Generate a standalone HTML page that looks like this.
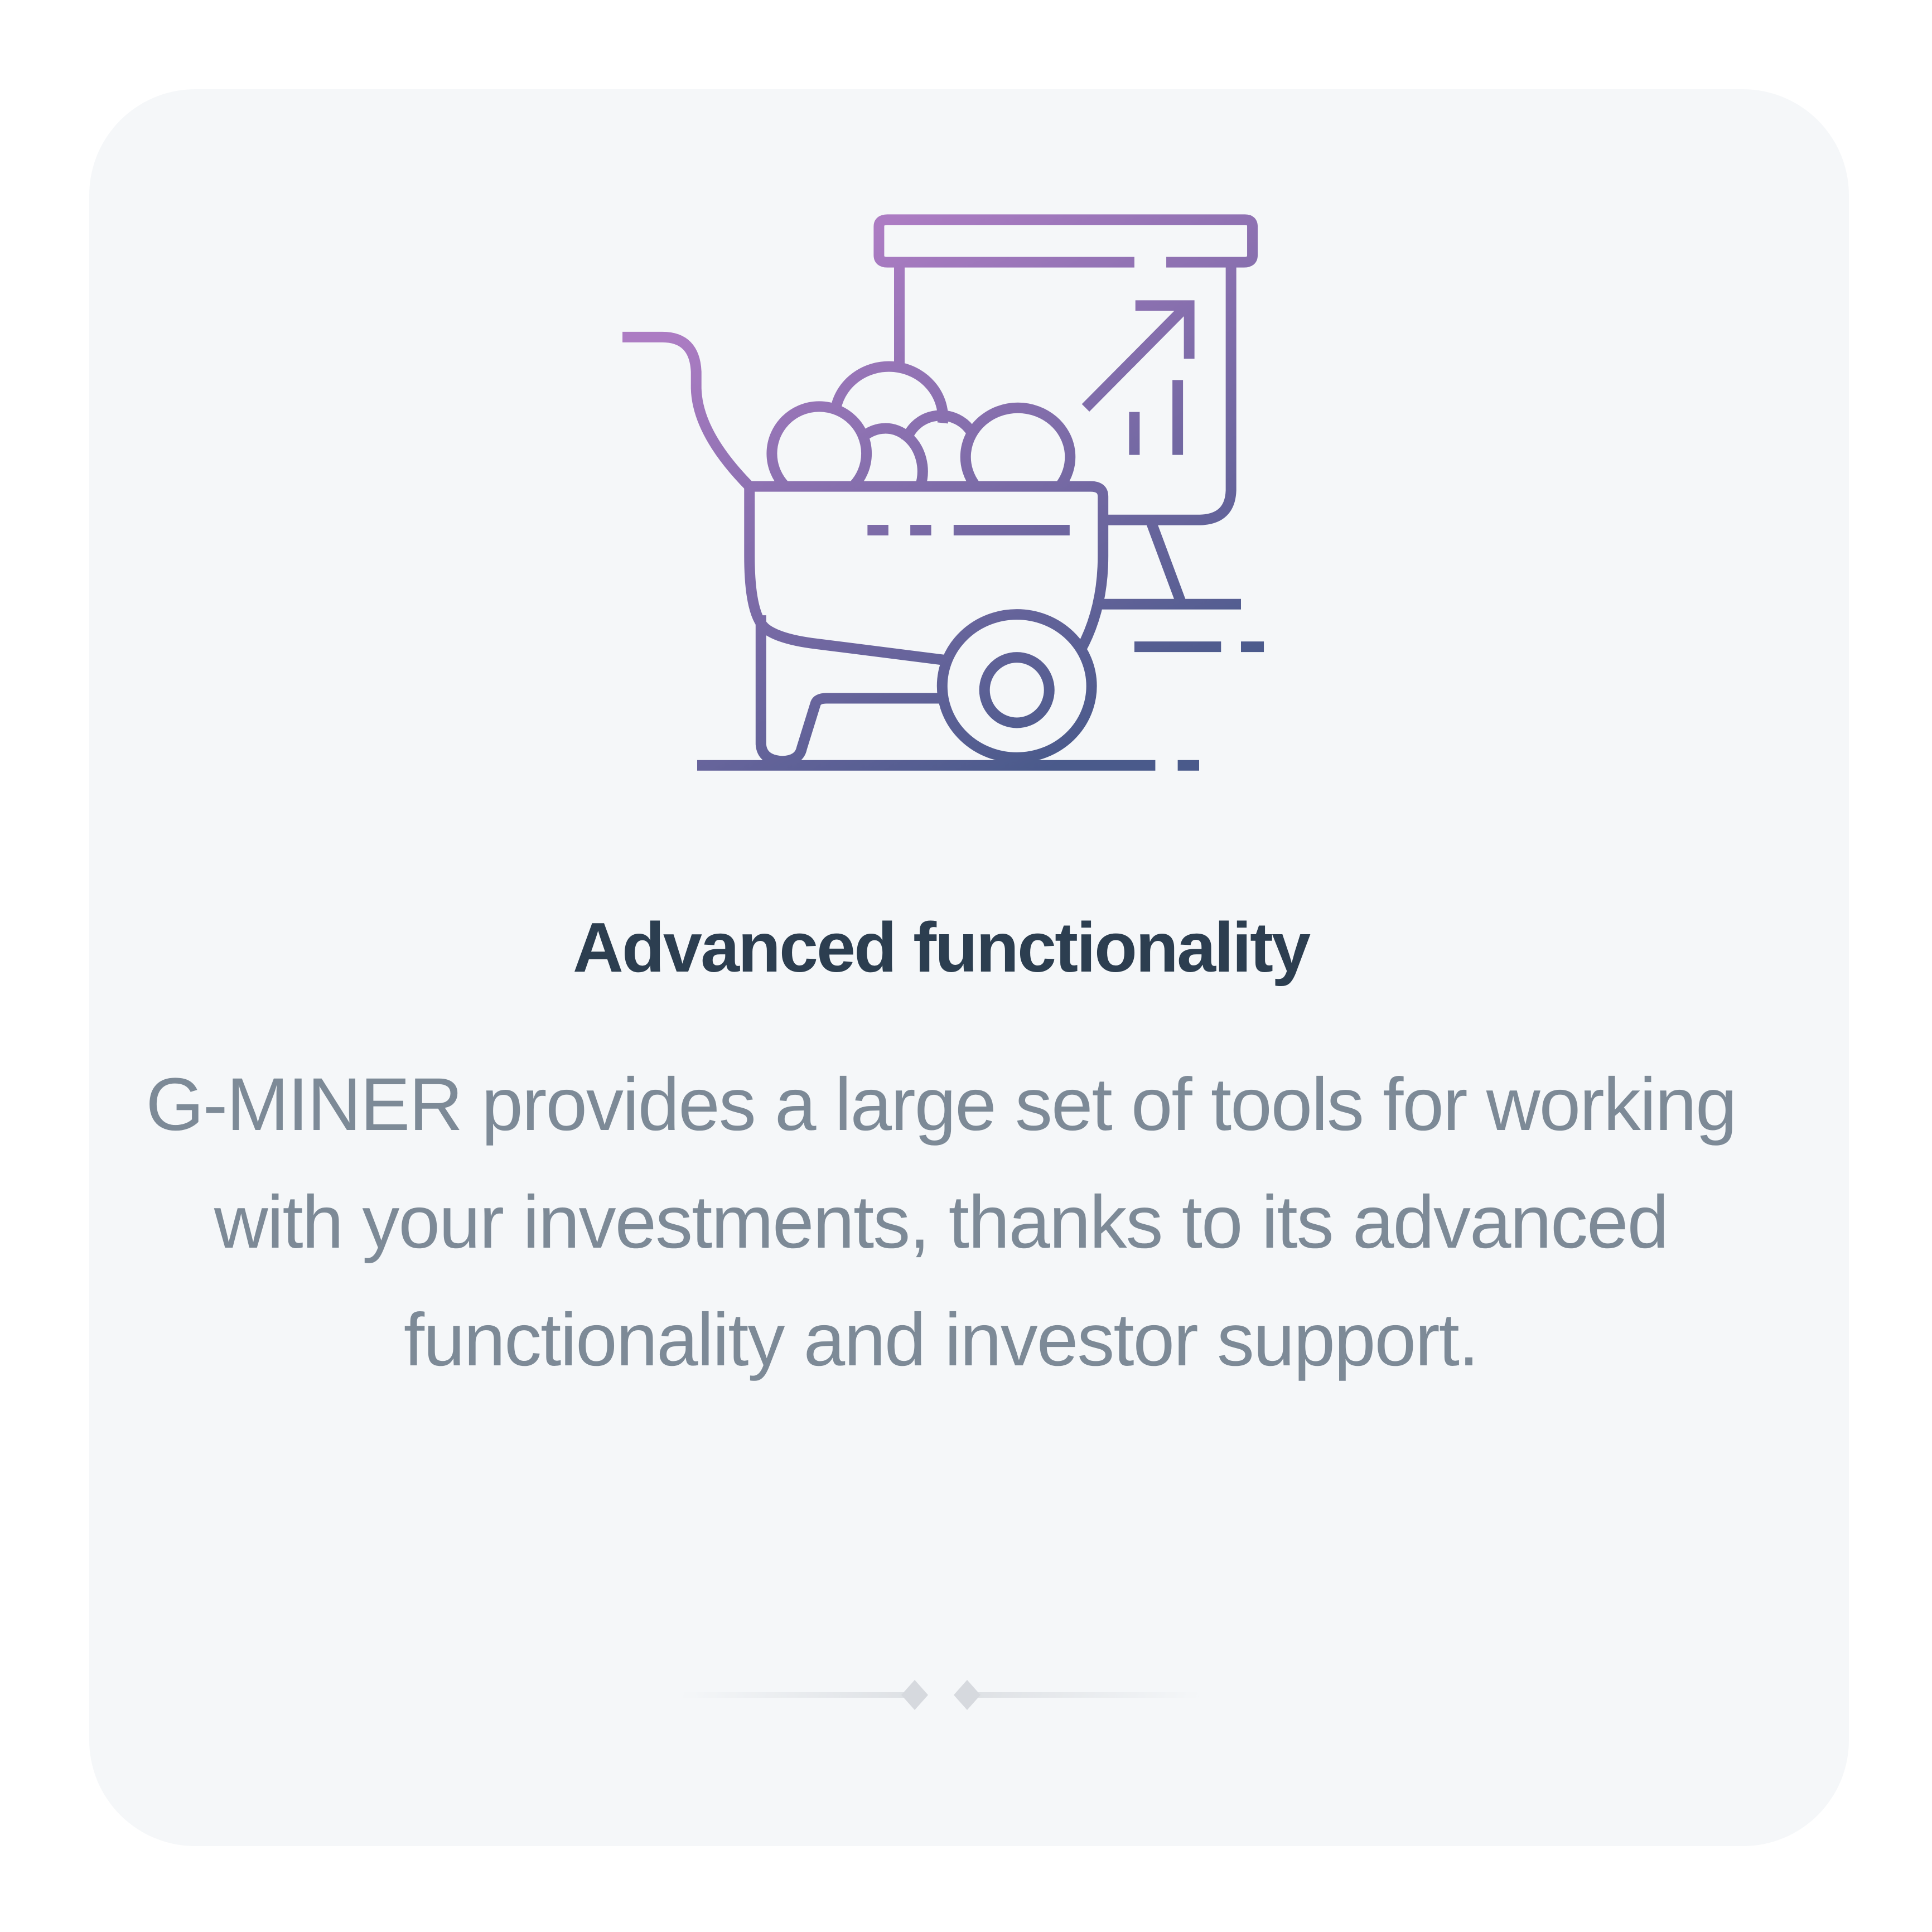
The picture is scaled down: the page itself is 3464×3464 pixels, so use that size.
<!DOCTYPE html>
<html><head><meta charset="utf-8"><style>
html,body{margin:0;padding:0;background:#fff;}
body{width:3464px;height:3464px;position:relative;overflow:hidden;font-family:"Liberation Sans",sans-serif;}
.card{position:absolute;left:160px;top:160px;width:3155px;height:3150px;border-radius:190px;background:#f5f7f9;}
h1{position:absolute;left:-45px;width:3464px;top:1626px;margin:0;text-align:center;font-size:126px;font-weight:bold;color:#2c3e50;letter-spacing:-3px;}
p{position:absolute;left:-45px;width:3464px;top:1875px;margin:0;text-align:center;font-size:134px;line-height:211px;color:#7d8a97;letter-spacing:-2px;}
</style></head><body>
<div class="card"></div>
<svg style="position:absolute;left:1000px;top:300px" width="1400" height="1150" viewBox="0 0 1568 1568" preserveAspectRatio="none" fill="none">
<defs><linearGradient id="g" x1="400" y1="300" x2="1100" y2="1400" gradientUnits="userSpaceOnUse"><stop offset="0" stop-color="#ac7cc3"/><stop offset="1" stop-color="#4a5a8b"/></linearGradient></defs>
<g stroke="url(#g)" stroke-width="19">
<path vector-effect="non-scaling-stroke" d="M1158 232 H662 Q645 232 645 215 V145 Q645 128 662 128 H1380 Q1395 128 1395 145 V215 Q1395 232 1378 232 H1222"/>
<path vector-effect="non-scaling-stroke" d="M686 240 V490"/>
<path vector-effect="non-scaling-stroke" d="M1352 240 V790 Q1350 860 1290 862 H1100"/>
<path vector-effect="non-scaling-stroke" d="M1190 862 L1252 1065"/>
<path vector-effect="non-scaling-stroke" d="M1085 1068 H1372"/>
<path vector-effect="non-scaling-stroke" d="M1060 588 L1262 340"/>
<path vector-effect="non-scaling-stroke" d="M1160 338 H1268 V468"/>
<path vector-effect="non-scaling-stroke" d="M1158 598 V703 M1245 520 V703"/>
<path vector-effect="non-scaling-stroke" d="M1158 1172 H1332 M1372 1172 H1418"/>
<path vector-effect="non-scaling-stroke" d="M130 415 H210 Q275 415 278 500 V540 Q280 650 385 780"/>
<path vector-effect="non-scaling-stroke" d="M385 780 H1070 Q1095 780 1095 805 V950 Q1095 1080 1050 1180"/>
<path vector-effect="non-scaling-stroke" d="M385 780 V950 Q385 1100 420 1130 Q450 1155 520 1165 L780 1205"/>
<path vector-effect="non-scaling-stroke" d="M622 887 H664 M708 887 H750 M795 887 H1028"/>
<path vector-effect="non-scaling-stroke" d="M408 1095 V1410 Q410 1450 452 1452 Q485 1450 490 1420 L518 1310 Q522 1298 540 1298 H770"/>
<ellipse vector-effect="non-scaling-stroke" cx="922" cy="1268" rx="150" ry="175"/>
<ellipse vector-effect="non-scaling-stroke" cx="922" cy="1278" rx="65" ry="80"/>
<path vector-effect="non-scaling-stroke" d="M280 1462 H1200 M1245 1462 H1288"/>
<path vector-effect="non-scaling-stroke" d="M457 780 A95 115 0 1 1 593 780"/>
<path vector-effect="non-scaling-stroke" d="M557 600 A108 125 0 0 1 773 625"/>
<path vector-effect="non-scaling-stroke" d="M612 660 A75 105 0 0 1 728 780"/>
<path vector-effect="non-scaling-stroke" d="M700 668 A72 85 0 0 1 832 650"/>
<path vector-effect="non-scaling-stroke" d="M840 780 A105 120 0 1 1 1008 780"/>
</g>
</svg>
<h1>Advanced functionality</h1>
<p>G-MINER provides a large set of tools for working<br>with your investments, thanks to its advanced<br>functionality and investor support.</p>
<svg style="position:absolute;left:1200px;top:3000px" width="1000" height="80" viewBox="0 0 1000 80">
<defs><linearGradient id="l1" x1="0" x2="1"><stop offset="0" stop-color="#dde0e4" stop-opacity="0"/><stop offset="1" stop-color="#dde0e4"/></linearGradient>
<linearGradient id="l2" x1="0" x2="1"><stop offset="0" stop-color="#dde0e4"/><stop offset="1" stop-color="#dde0e4" stop-opacity="0"/></linearGradient></defs>
<rect x="20" y="34" width="420" height="10" fill="url(#l1)"/>
<rect x="534" y="34" width="420" height="10" fill="url(#l2)"/>
<path d="M440 12 L464 39 L440 66 L416 39Z M534 12 L558 39 L534 66 L510 39Z" fill="#d6d9de"/>
</svg>
</body></html>
